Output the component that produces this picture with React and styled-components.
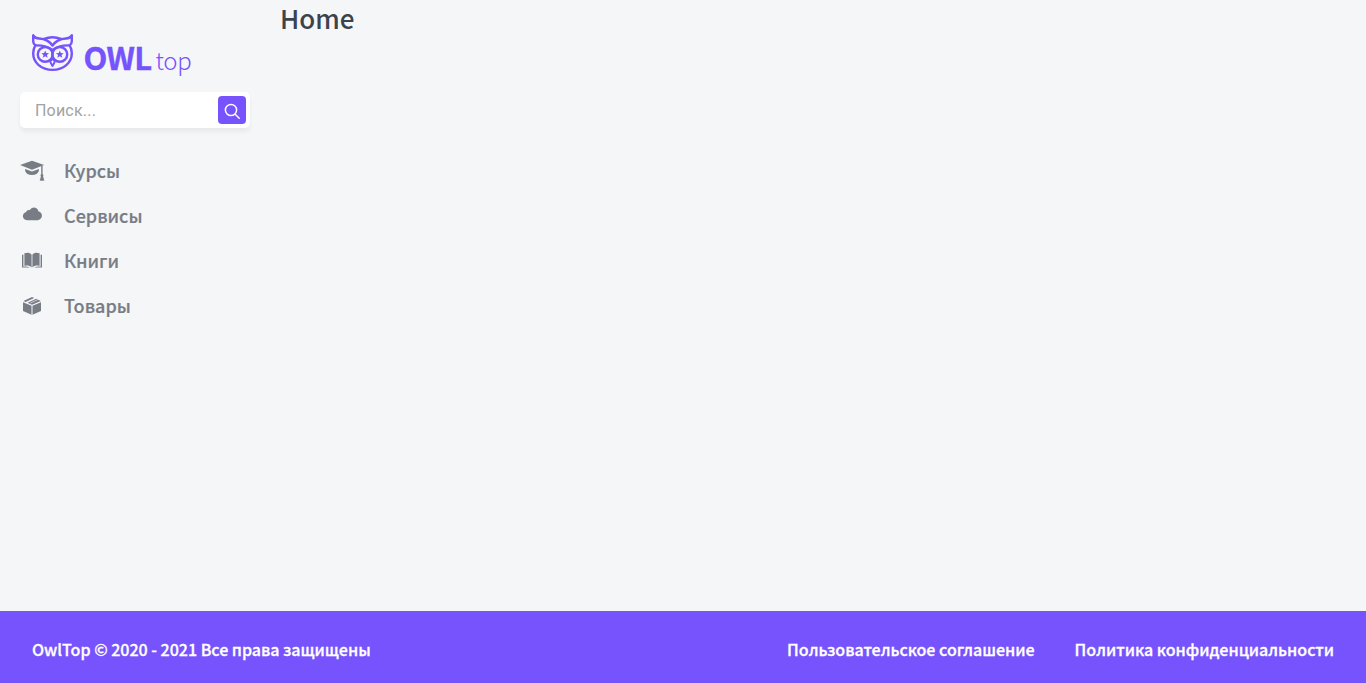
import React from "react";
import styled, { createGlobalStyle } from "styled-components";

const GlobalStyle = createGlobalStyle`
  *, *::before, *::after { box-sizing: border-box; }
  html, body { margin: 0; padding: 0; }
  body {
    background: #f5f6f8;
    color: #3b434e;
    font-family: "Noto Sans CJK KR", "Noto Sans CJK SC", "Noto Sans", sans-serif;
    -webkit-font-smoothing: antialiased;
  }
`;

const Layout = styled.div`
  display: grid;
  grid-template-columns: 230px 1fr;
  grid-template-rows: 1fr 72px;
  column-gap: 30px;
  min-height: 100vh;
`;

const Sidebar = styled.aside`
  padding: 32px 0 0 20px;
  width: 250px;
`;

const Brand = styled.a`
  display: flex;
  height: 44px;
  padding-left: 11px;
  color: #7653fc;
`;

const OwlIcon = styled.svg`
  width: 43px;
  height: 41px;
  flex: none;
`;

const Wordmark = styled.span`
  display: flex;
  align-items: baseline;
  margin-left: 9.5px;
  line-height: 50px;
  white-space: nowrap;
`;

const WordmarkBold = styled.span`
  font-size: 31px;
  font-weight: 700;
  letter-spacing: -0.7px;
  -webkit-text-stroke: 0.4px currentColor;
`;

const WordmarkLight = styled.span`
  margin-left: 4px;
  font-size: 24px;
  font-weight: 300;
  letter-spacing: -0.3px;
`;

const SearchForm = styled.form`
  display: flex;
  align-items: center;
  width: 230px;
  height: 36px;
  margin-top: 16px;
  padding: 0 4px 0 0;
  border-radius: 5px;
  background: #fff;
  box-shadow: 0 4px 4px rgba(0, 0, 0, 0.05);
`;

const SearchInput = styled.input`
  flex: 1;
  min-width: 0;
  padding: 2px 15px 0;
  border: 0;
  outline: none;
  background: transparent;
  font: 400 16px/20px Roboto, sans-serif;
  letter-spacing: 0.2px;
  &::placeholder { color: #a2a2a2; opacity: 1; }
`;

const SearchButton = styled.button`
  display: flex;
  align-items: center;
  justify-content: center;
  width: 28px;
  height: 28px;
  padding: 2px 0 0;
  border: 0;
  border-radius: 4px;
  background: #7653fc;
`;

const Menu = styled.nav`
  display: flex;
  flex-direction: column;
  gap: 20px;
  margin-top: 30px;
`;

const MenuItem = styled.a`
  display: flex;
  align-items: center;
  height: 25px;
  color: #787d85;
  font-size: 18px;
  font-weight: 500;
  line-height: 25px;
  -webkit-text-stroke: 0.2px currentColor;
`;

const MenuIcon = styled.svg`
  width: 24px;
  height: 24px;
  margin-right: 20px;
  flex: none;
  overflow: visible;
  fill: currentColor;
`;

const Content = styled.main`
  padding-left: 20px;
`;

const Title = styled.h1`
  margin: 0;
  font-size: 26px;
  font-weight: 500;
  line-height: 36px;
`;

const Footer = styled.footer`
  grid-column: 1 / -1;
  display: flex;
  align-items: center;
  gap: 40px;
  padding: 4px 32px 0;
  background: #7653fc;
  color: #fff;
  font-size: 16px;
  font-weight: 500;
  line-height: 20px;
  -webkit-text-stroke: 0.3px currentColor;
`;

const Copyright = styled.span`
  margin-right: auto;
`;

const FooterLink = styled.a`
  white-space: nowrap;
`;

const STAR = "M0-3.9 1.1-1.3 3.9-1.2 1.7.6 2.5 3.4 0 1.8-2.5 3.4-1.7.6-3.9-1.2-1.1-1.3Z";

const menu = [
  {
    label: "Курсы",
    icon: (
      <g transform="translate(0 1)">
        <path d="M12 .7 24.2 5.1 12 9.7.1 5.1Z" />
        <path d="M5.1 8.9 12 11.5l6.9-2.6v1.8c-.7 2.8-3.3 4.4-6.9 4.4s-6.2-1.6-6.9-4.4Z" />
        <path d="M21.2 6h1.4v8.1a1.8 1.8 0 0 1 .5 2.5l1.3 4.1-1.4-.3-1 .5-1-.5-1.3.3 1.2-4.1a1.8 1.8 0 0 1 .3-2.5Z" />
      </g>
    ),
  },
  {
    label: "Сервисы",
    icon: (
      <path d="M7 16.2C1.8 16.2 1.6 9.2 6.1 8.1 6.9 6.4 8.4 5.9 9.8 6.2 11.6 2.4 17.4 2.6 18.4 7.3c4.8 1.4 4.9 8-.6 8.9Z" />
    ),
  },
  {
    label: "Книги",
    icon: (
      <>
        <path d="M4.4 4.3C7.3 3.2 9.8 3.5 11.6 5.6v12.9c-2-1.9-4.5-2.3-7.2-1.6ZM19.6 4.3c-2.9-1.1-5.4-.8-7.2 1.3v12.9c2-1.9 4.5-2.3 7.2-1.6Z" />
        <path d="M2 5.7h1.4v12.1c2.3-.5 4.5-.3 6.3.6H2ZM22 5.7h-1.4v12.1c-2.3-.5-4.5-.3-6.3.6H22Z" />
      </>
    ),
  },
  {
    label: "Товары",
    icon: (
      <>
        <path d="m3 8.2 8.5 3.6v9L3 16.9ZM21 8.2l-8.5 3.6v9l8.5-3.9Z" />
        <path d="M3.4 7.1 12 3.1l2.2.9-8.6 4ZM7.6 8.8l8.6-4 4.6 2.1-8.8 3.8Z" />
        <path d="m10.2 9.1 7.6-3.5" fill="none" stroke="#f5f6f8" strokeWidth=".6" />
      </>
    ),
  },
];

export default function App() {
  return (
    <>
      <GlobalStyle />
      <Layout>
        <Sidebar>
          <Brand>
            <OwlIcon viewBox="0 0 43 41" fill="none" stroke="currentColor" strokeWidth="2.4" strokeLinecap="round" strokeLinejoin="round">
              <path d="M2.2 3.3v6c0 2 1 3.3 2.2 4.1C2.7 16 2.2 18.5 2.2 21.5c0 9.2 8.2 16.4 19.3 16.4s19.3-7.2 19.3-16.4c0-3-.5-5.5-2.2-8.1 1.2-.8 2.2-2.1 2.2-4.1v-6c-1.1 2-3 3-5.9 3.2-6.2.4-10.6 2.7-13.4 7.1C18.7 9.2 14.3 6.9 8.1 6.5 5.2 6.3 3.3 5.3 2.2 3.3Z" />
              <path d="M13 6.9c5.3-2 11.7-2 17 0M4.4 13.4c6.8-.3 12.5 1.1 17.1 4.6 4.6-3.5 10.3-4.9 17.1-4.6" />
              <circle cx="14.2" cy="22.4" r="7.4" />
              <circle cx="28.8" cy="22.4" r="7.4" />
              <path d="M21.5 27.2c-1.4.7-2.2 1.7-2.2 2.8l2.2 4 2.2-4c0-1.1-.8-2.1-2.2-2.8Z" strokeWidth="1.9" />
              <path d={STAR} transform="translate(14.2 22.4)" fill="currentColor" stroke="none" />
              <path d={STAR} transform="translate(28.8 22.4)" fill="currentColor" stroke="none" />
            </OwlIcon>
            <Wordmark>
              <WordmarkBold>OWL</WordmarkBold>
              <WordmarkLight>top</WordmarkLight>
            </Wordmark>
          </Brand>
          <SearchForm>
            <SearchInput placeholder="Поиск..." />
            <SearchButton type="button" aria-label="Поиск">
              <svg width="16" height="16" viewBox="0 0 16 16" fill="none" stroke="#fff" strokeWidth="1.5" strokeLinecap="round">
                <circle cx="7" cy="7" r="5.6" />
                <path d="m11.2 11.2 4 4" />
              </svg>
            </SearchButton>
          </SearchForm>
          <Menu>
            {menu.map((item) => (
              <MenuItem key={item.label}>
                <MenuIcon viewBox="0 0 24 24">{item.icon}</MenuIcon>
                {item.label}
              </MenuItem>
            ))}
          </Menu>
        </Sidebar>
        <Content>
          <Title>Home</Title>
        </Content>
        <Footer>
          <Copyright>OwlTop © 2020 - 2021 Все права защищены</Copyright>
          <FooterLink>Пользовательское соглашение</FooterLink>
          <FooterLink>Политика конфиденциальности</FooterLink>
        </Footer>
      </Layout>
    </>
  );
}
